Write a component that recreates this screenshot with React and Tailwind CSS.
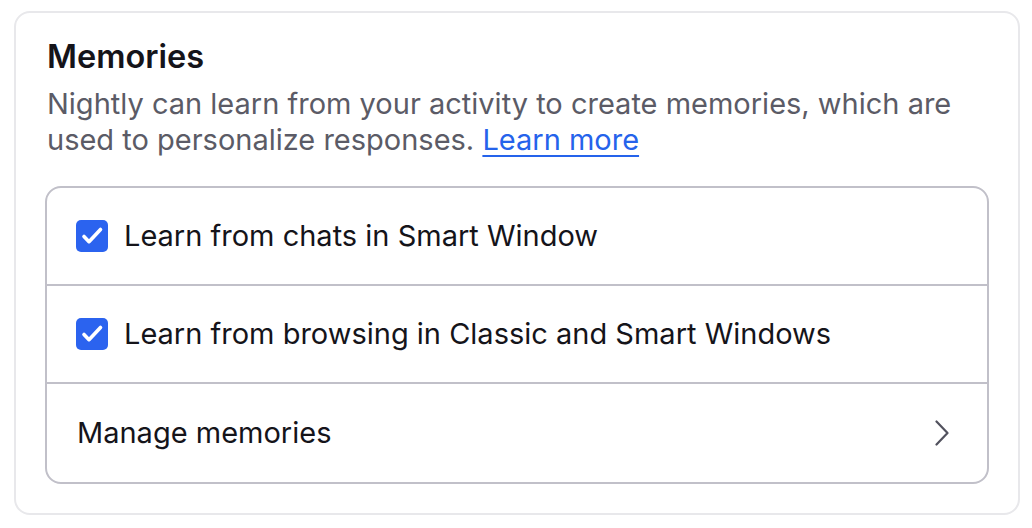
import React, { useState } from 'react';

const Checkbox = ({ checked, onChange }) => (
    <button
        onClick={onChange}
        className={`w-[32px] h-[32px] rounded-[5px] flex items-center justify-center shrink-0 ${checked ? 'bg-[#2b63ef]' : 'border-2 border-[#8f8f9d] bg-white'}`}
    >
        {checked && (
            <svg width="32" height="32" viewBox="0 0 32 32" fill="none">
                <path d="M8 16.5l5 5.2L24.5 9.5" stroke="white" strokeWidth="3.6" strokeLinecap="round" strokeLinejoin="round" />
            </svg>
        )}
    </button>
);

export default function App() {
    const [chats, setChats] = useState(true);
    const [browsing, setBrowsing] = useState(true);

    return (
        <div className="w-[1032px] h-[528px] bg-white pt-[11px] pl-[14px]" style={{ fontFamily: 'Inter, "Noto Sans", sans-serif' }}>
            <div className="w-[1006px] h-[504px] border-2 border-[#e8e8eb] rounded-[16px] pl-[29px] pt-[26px]">
                <h2 className="text-[32.5px] leading-[36px] font-semibold text-[#15141a] pl-[2px]">Memories</h2>
                <p className="text-[29px] leading-[36px] text-[#5b5b66] w-[910px] pl-[2px] mt-[11px]">
                    Nightly can learn from your activity to create memories, which are used to personalize responses.{' '}
                    <a href="#" className="text-[#2563eb] underline underline-offset-[5px] decoration-[1.5px]">Learn more</a>
                </p>

                {/* settings box */}
                <div className="mt-[28px] w-[944px] border-2 border-[#c1c0c9] rounded-[16px] flex flex-col">
                    <label className="h-[98px] flex items-center gap-[16px] pl-[29px] border-b-2 border-[#c1c0c9]">
                        <Checkbox checked={chats} onChange={() => setChats(!chats)} />
                        <span className="text-[29px] text-[#15141a]">Learn from chats in Smart Window</span>
                    </label>
                    <label className="h-[98px] flex items-center gap-[16px] pl-[29px] border-b-2 border-[#c1c0c9]">
                        <Checkbox checked={browsing} onChange={() => setBrowsing(!browsing)} />
                        <span className="text-[29px] text-[#15141a]">Learn from browsing in Classic and Smart Windows</span>
                    </label>
                    <button className="h-[98px] flex items-center justify-between pl-[30px] pr-[38px]">
                        <span className="text-[29px] text-[#15141a]">Manage memories</span>
                        <svg width="14" height="26" viewBox="0 0 14 26" fill="none">
                            <path d="M1.5 1.5L12.5 13L1.5 24.5" stroke="#52525e" strokeWidth="2.2" strokeLinecap="round" strokeLinejoin="round" />
                        </svg>
                    </button>
                </div>
            </div>
        </div>
    );
}
